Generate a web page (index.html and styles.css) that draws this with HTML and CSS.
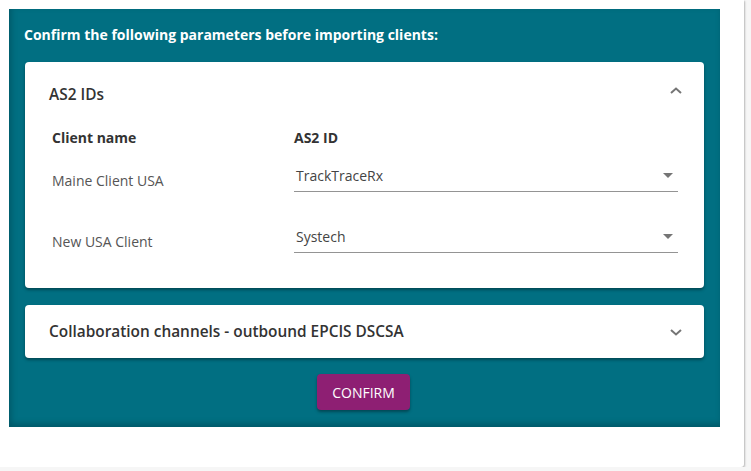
FILE: index.html
```html
<!DOCTYPE html>
<html>
<head>
<meta charset="utf-8">
<link rel="stylesheet" href="styles.css">
</head>
<body>
<div class="dialog">
  <div class="panel">
    <div class="title">Confirm the following parameters before importing clients:</div>
    <div class="card">
      <div class="card-head">
        <span class="card-title">AS2 IDs</span>
        <svg class="chev up" width="12" height="7" viewBox="0 0 12 7"><path d="M1 6 L6 1.5 L11 6" fill="none" stroke="#757575" stroke-width="2"/></svg>
      </div>
      <div class="grid">
        <div class="colhead">Client name</div>
        <div class="colhead">AS2 ID</div>
        <div class="label">Maine Client USA</div>
        <div class="cell"><div class="select"><span>TrackTraceRx</span><svg width="10" height="5" viewBox="0 0 10 5"><path d="M0 0 L10 0 L5 5 Z" fill="#757575"/></svg></div></div>
        <div class="label">New USA Client</div>
        <div class="cell"><div class="select"><span>Systech</span><svg width="10" height="5" viewBox="0 0 10 5"><path d="M0 0 L10 0 L5 5 Z" fill="#757575"/></svg></div></div>
      </div>
    </div>
    <div class="card collapsed">
      <div class="card-head small">
        <span class="card-title">Collaboration channels - outbound EPCIS DSCSA</span>
        <svg class="chev down" width="12" height="7" viewBox="0 0 12 7"><path d="M1 1 L6 5.5 L11 1" fill="none" stroke="#757575" stroke-width="2"/></svg>
      </div>
    </div>
    <div class="actions">
      <button class="btn">CONFIRM</button>
    </div>
  </div>
</div>
</body>
</html>
```

FILE: styles.css
```css
html, body {
  margin: 0;
  padding: 0;
  background: #f6f6f6;
  font-family: "Open Sans", "Noto Sans", sans-serif;
}
.dialog {
  width: 744px;
  height: 467px;
  box-sizing: border-box;
  background: #fff;
  padding: 9px 24px 0 9px;
  box-shadow: 1px 1px 2px rgba(0,0,0,0.25);
  border-radius: 0 0 3px 0;
}
.panel {
  width: 711px;
  height: 418px;
  box-sizing: border-box;
  background: #016f82;
  padding: 16px 16px 0 16px;
  box-shadow: inset 2px -3px 6px rgba(0,0,0,0.22);
}
.title {
  color: #fff;
  font-weight: 700;
  font-size: 14px;
  line-height: 20px;
  margin-left: -1px;
  margin-bottom: 17px;
}
.card {
  background: #fff;
  border-radius: 4px;
  box-shadow: 0 2px 3px rgba(0,0,0,0.35);
  padding-bottom: 16px;
}
.card.collapsed {
  margin-top: 17px;
  padding-bottom: 0;
}
.card-head {
  height: 64px;
  display: flex;
  align-items: center;
  justify-content: space-between;
  padding: 0 22px 0 24px;
}
.card-head.small {
  height: 53px;
}
.card-title {
  font-size: 15.4px;
  font-weight: 600;
  color: #333;
}
.chev.up {
  margin-top: -8px;
}
.chev.down {
  margin-top: 1px;
}
.grid {
  display: grid;
  grid-template-columns: 242px 1fr;
  grid-template-rows: 24px 61px 61px;
  padding: 0 26px 0 27px;
  align-items: center;
}
.colhead {
  font-size: 14px;
  font-weight: 700;
  color: #333;
  line-height: 20px;
}
.label {
  font-size: 14px;
  color: #555;
  line-height: 20px;
}
.cell {
  display: flex;
  align-items: center;
}
.select {
  flex: 1;
  height: 32px;
  box-sizing: border-box;
  margin-bottom: 10px;
  border-bottom: 1px solid #949494;
  display: flex;
  align-items: center;
  justify-content: space-between;
  padding: 0 5px 0 2px;
  font-size: 14px;
  color: #444;
}
.actions {
  display: flex;
  justify-content: center;
  margin-top: 16px;
}
.btn {
  width: 93px;
  height: 36px;
  border: none;
  border-radius: 4px;
  background: #8e1f73;
  color: #fff;
  font-family: "Open Sans", "Noto Sans", sans-serif;
  font-size: 14px;
  font-weight: 500;
  box-shadow: 0 2px 3px rgba(0,0,0,0.35);
  padding: 0;
  margin-left: -2px;
}
```
